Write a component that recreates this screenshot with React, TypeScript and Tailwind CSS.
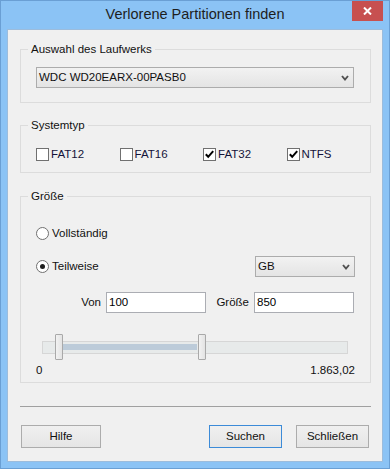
import React from "react";

const font = { fontFamily: '"Liberation Sans", Arial, sans-serif' };

function Chevron() {
  return (
    <svg width="8" height="6" viewBox="0 0 8 6" className="shrink-0">
      <polyline points="1,1 4,4.5 7,1" fill="none" stroke="#505050" strokeWidth="1.9" />
    </svg>
  );
}

function Combo({ text, className }: { text: string; className: string }) {
  return (
    <div
      className={`flex items-center justify-between border border-[#acacac] bg-gradient-to-b from-[#f2f2f2] to-[#e4e4e4] pl-[2px] pr-[4px] text-[11.5px] text-[#111] ${className}`}
    >
      <span>{text}</span>
      <Chevron />
    </div>
  );
}

function Checkbox({ checked, label }: { checked: boolean; label: string }) {
  return (
    <div className="flex w-[86px] items-center">
      <div className="flex h-[13px] w-[13px] items-center justify-center border border-[#707070] bg-white">
        {checked && (
          <svg width="11" height="11" viewBox="0 0 11 11">
            <polyline points="1.8,5.3 4.2,7.8 9.2,2.2" fill="none" stroke="#000" strokeWidth="2" />
          </svg>
        )}
      </div>
      <span className="ml-[2px] text-[11.5px] text-[#14143a]">{label}</span>
    </div>
  );
}

function Radio({ checked, label }: { checked: boolean; label: string }) {
  return (
    <div className="flex items-center">
      <div className="flex h-[13px] w-[13px] items-center justify-center rounded-full border border-[#707070] bg-white">
        {checked && <div className="h-[5px] w-[5px] rounded-full bg-[#1c1c1c]" />}
      </div>
      <span className="ml-[3px] text-[11.5px] text-[#111]">{label}</span>
    </div>
  );
}

function Group({ title, className, children }: { title: string; className: string; children: React.ReactNode }) {
  return (
    <div className={`relative border border-[#dcdcdc] ${className}`}>
      <span className="absolute -top-[8px] left-[7px] bg-[#f0f0f0] px-[3px] text-[11.5px] leading-[14px] text-[#111]">
        {title}
      </span>
      {children}
    </div>
  );
}

function Button({ label, className }: { label: string; className: string }) {
  return (
    <div
      className={`flex h-[23px] items-center justify-center border bg-gradient-to-b from-[#f0f0f0] to-[#e5e5e5] text-[11.5px] text-[#111] ${className}`}
    >
      {label}
    </div>
  );
}

function Input({ value }: { value: string }) {
  return (
    <div className="flex h-[21px] w-[100px] items-center border border-[#abadb3] bg-white pl-[2px] text-[11.5px] text-[#000]">
      {value}
    </div>
  );
}

export default function App() {
  return (
    <div style={font} className="flex h-[469px] w-[390px] flex-col border border-[#6a9fd4] bg-[#8bc3f5]">
      <div className="relative flex h-[28px] shrink-0 items-center justify-center">
        <span className="text-[14.5px] text-[#1e1e1e]">Verlorene Partitionen finden</span>
        <div className="absolute right-[6px] top-0 flex h-[20px] w-[31px] items-center justify-center bg-[#c75050]">
          <svg width="9" height="8" viewBox="0 0 9 8">
            <path d="M1 0.5 L8 7.5 M8 0.5 L1 7.5" stroke="#fff" strokeWidth="2" />
          </svg>
        </div>
      </div>
      <div className="mx-[6px] mb-[6px] flex flex-1 flex-col border border-[#9cbcdc] bg-[#f0f0f0] pl-[12px] pr-[11px]">
        <Group title="Auswahl des Laufwerks" className="mt-[19px] h-[54px] shrink-0">
          <Combo text="WDC WD20EARX-00PASB0" className="ml-[15px] mr-[16px] mt-[17px] h-[21px]" />
        </Group>

        <Group title="Systemtyp" className="mt-[22px] h-[48px] shrink-0">
          <div className="ml-[15px] mt-[20px] flex">
            <Checkbox checked={false} label="FAT12" />
            <Checkbox checked={false} label="FAT16" />
            <Checkbox checked={true} label="FAT32" />
            <Checkbox checked={true} label="NTFS" />
          </div>
        </Group>

        <Group title="Größe" className="mt-[23px] h-[187px] shrink-0">
          <div className="ml-[15px] mt-[30px] flex h-[13px] items-center">
            <Radio checked={false} label="Vollständig" />
          </div>
          <div className="mt-[16px] flex h-[21px] items-center justify-between pl-[15px] pr-[15px]">
            <Radio checked={true} label="Teilweise" />
            <Combo text="GB" className="h-[21px] w-[100px]" />
          </div>
          <div className="mt-[15px] flex h-[21px] items-center text-[11.5px] text-[#111]">
            <span className="w-[80px] text-right">Von</span>
            <div className="ml-[5px]">
              <Input value="100" />
            </div>
            <span className="w-[43px] text-right">Größe</span>
            <div className="ml-[5px]">
              <Input value="850" />
            </div>
          </div>
          <div className="relative ml-[21px] mt-[21px] h-[26px] w-[306px]">
            <div className="absolute left-0 top-[7px] h-[13px] w-[306px] border border-[#d6d6d6] bg-[#e7eaea]" />
            <div className="absolute left-[21px] top-[10px] h-[6px] w-[134px] bg-[#bccbd9]" />
            <div className="absolute left-[13px] top-0 h-[26px] w-[8px] rounded-[1px] border border-[#a9a9a9] bg-gradient-to-r from-[#f2f2f2] to-[#e3e3e3]" />
            <div className="absolute left-[156px] top-0 h-[26px] w-[8px] rounded-[1px] border border-[#a9a9a9] bg-gradient-to-r from-[#f2f2f2] to-[#e3e3e3]" />
          </div>
          <div className="mt-[4px] flex h-[14px] items-center justify-between pl-[15px] pr-[15px] text-[11.5px] text-[#111]">
            <span>0</span>
            <span>1.863,02</span>
          </div>
        </Group>

        <div className="mt-[23px] h-px shrink-0 bg-[#a0a0a0]" />

        <div className="mt-[18px] flex items-center pl-[1px] pr-[2px]">
          <Button label="Hilfe" className="w-[80px] border-[#acacac]" />
          <div className="flex-1" />
          <Button label="Suchen" className="w-[73px] border-[#3c8bd8]" />
          <Button label="Schließen" className="ml-[14px] w-[73px] border-[#acacac]" />
        </div>
      </div>
    </div>
  );
}
